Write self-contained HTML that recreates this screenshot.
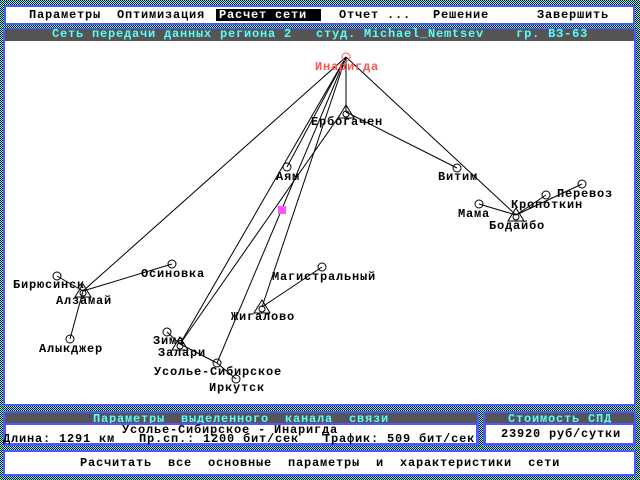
<!DOCTYPE html>
<html><head><meta charset="utf-8"><style>
body{margin:0;width:640px;height:480px;overflow:hidden;position:relative;
background:repeating-conic-gradient(#55ffff 0 25%,#000 0 50%) 0 0/2px 2px;
font-family:"Liberation Mono","DejaVu Sans Mono",monospace;font-weight:bold;font-size:12px;letter-spacing:0.8px;}
.a{position:absolute;box-sizing:border-box;}
.w{background:#fff;border:2px solid #5555ff;}
.g{background:#555;color:#55ffff;white-space:pre;line-height:11px;}
.t{position:absolute;white-space:pre;line-height:10px;}
</style></head><body>
<div class="a w" style="left:4px;top:5px;width:631px;height:20px;"></div>
<div class="t" style="left:29px;top:10px">Параметры</div>
<div class="t" style="left:117px;top:10px">Оптимизация</div>
<div class="a" style="left:216px;top:9px;width:105px;height:12px;background:#000"></div>
<div class="t" style="left:219px;top:10px;color:#fff">Расчет сети</div>
<div class="t" style="left:339px;top:10px">Отчет ...</div>
<div class="t" style="left:433px;top:10px">Решение</div>
<div class="t" style="left:537px;top:10px">Завершить</div>

<div class="a" style="left:3px;top:28px;width:633px;height:378px;border:2px solid #5555ff;background:#fff"></div>
<div class="a g" style="left:5px;top:29px;width:629px;height:12px;padding-left:47px">Сеть передачи данных региона 2   студ. Michael_Nemtsev    гр. ВЗ-63</div>

<svg class="a" style="left:0;top:0" width="640" height="480" font-family="Liberation Mono,monospace" font-weight="bold" font-size="12" letter-spacing="0.8">
<g stroke="#000" stroke-width="1" fill="none">
<line x1="346" y1="57" x2="346" y2="112"/>
<line x1="346" y1="57" x2="516" y2="215"/>
<line x1="346" y1="112" x2="457" y2="168"/>
<line x1="346" y1="57" x2="83" y2="291"/>
<line x1="346" y1="57" x2="287" y2="167"/>
<line x1="346" y1="57" x2="180" y2="344"/>
<line x1="346" y1="57" x2="262" y2="307"/>
<line x1="346" y1="57" x2="217" y2="363"/>
<line x1="340" y1="115" x2="180" y2="344"/>
<line x1="83" y1="291" x2="57" y2="276"/>
<line x1="83" y1="291" x2="172" y2="264"/>
<line x1="83" y1="291" x2="70" y2="339"/>
<line x1="262" y1="307" x2="322" y2="267"/>
<line x1="180" y1="344" x2="167" y2="332"/>
<line x1="180" y1="344" x2="217" y2="363"/>
<line x1="217" y1="363" x2="236" y2="379"/>
<line x1="516" y1="215" x2="479" y2="204"/>
<line x1="516" y1="215" x2="546" y2="195"/>
<line x1="516" y1="215" x2="582" y2="184"/>
<circle cx="287" cy="167" r="4"/><circle cx="457" cy="168" r="4"/>
<circle cx="479" cy="204" r="4"/><circle cx="546" cy="195" r="4"/><circle cx="582" cy="184" r="4"/>
<circle cx="57" cy="276" r="4"/><circle cx="172" cy="264" r="4"/><circle cx="70" cy="339" r="4"/>
<circle cx="322" cy="267" r="4"/><circle cx="167" cy="332" r="4"/><circle cx="217" cy="363" r="4"/><circle cx="236" cy="379" r="4"/>
<circle cx="346" cy="57" r="4" stroke="#f55"/>
<g>
<path d="M346 105 L338 118 L354 118 Z"/><circle cx="346" cy="114" r="3"/>
<path d="M516 208 L508 221 L524 221 Z"/><circle cx="516" cy="217" r="3"/>
<path d="M83 284 L75 297 L91 297 Z"/><circle cx="83" cy="293" r="3"/>
<path d="M262 300 L254 313 L270 313 Z"/><circle cx="262" cy="309" r="3"/>
<path d="M180 337 L172 350 L188 350 Z"/><circle cx="180" cy="346" r="3"/>
</g></g>
<rect x="278" y="206" width="8" height="8" fill="#f5f"/>
<g text-anchor="middle">
<text x="347" y="70" fill="#f55">Инаригда</text>
<text x="347" y="125">Ербогачен</text>
<text x="288" y="180">Аям</text>
<text x="458" y="180">Витим</text>
<text x="517" y="229">Бодайбо</text>
<text x="474" y="217">Мама</text>
<text x="547" y="208">Кропоткин</text>
<text x="585" y="197">Перевоз</text>
<text x="84" y="304">Алзамай</text>
<text x="49" y="288">Бирюсинск</text>
<text x="173" y="277">Осиновка</text>
<text x="71" y="352">Алыкджер</text>
<text x="324" y="280">Магистральный</text>
<text x="263" y="320">Жигалово</text>
<text x="169" y="344">Зима</text>
<text x="182" y="356">Залари</text>
<text x="218" y="375">Усолье-Сибирское</text>
<text x="237" y="391">Иркутск</text>
</g>
</svg>

<div class="a" style="left:3px;top:411px;width:476px;height:35px;border:2px solid #5555ff;background:#555"></div>
<div class="t" style="left:93px;top:414px;color:#55ffff">Параметры  выделенного  канала  связи</div>
<div class="a w" style="left:4px;top:423px;width:474px;height:22px;"></div>
<div class="t" style="left:122px;top:425px">Усолье-Сибирское - Инаригда</div>
<div class="t" style="left:3px;top:434px">Длина: 1291 км   Пр.сп.: 1200 бит/сек   Трафик: 509 бит/сек</div>

<div class="a" style="left:483px;top:411px;width:153px;height:35px;border:2px solid #5555ff;background:#555"></div>
<div class="t" style="left:508px;top:414px;color:#55ffff">Стоимость СПД</div>
<div class="a w" style="left:484px;top:423px;width:151px;height:22px;"></div>
<div class="t" style="left:501px;top:429px">23920 руб/сутки</div>

<div class="a w" style="left:3px;top:450px;width:633px;height:26px;"></div>
<div class="t" style="left:80px;top:458px">Расчитать  все  основные  параметры  и  характеристики  сети</div>
</body></html>
